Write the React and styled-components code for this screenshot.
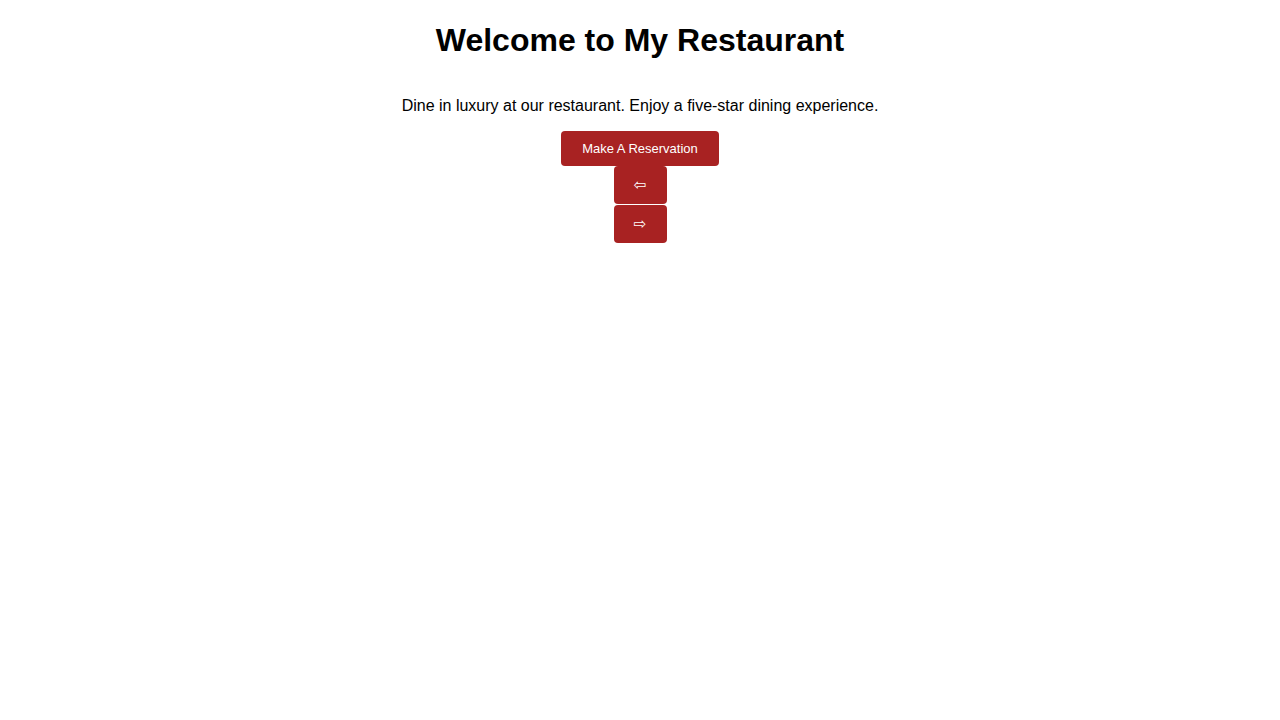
import React from "react";
import styled, { createGlobalStyle } from "styled-components";

const GlobalStyle = createGlobalStyle`
  body {
    margin: 0;
    background: #fff;
    font-family: "Liberation Sans", Arial, sans-serif;
    color: #000;
  }
`;

const Page = styled.div`
  display: flex;
  flex-direction: column;
  align-items: center;
  text-align: center;
`;

const Title = styled.h1`
  font-size: 32px;
  font-weight: bold;
  margin: 22px 0 0;
  line-height: 37px;
`;

const Tagline = styled.p`
  font-size: 16px;
  line-height: 18px;
  margin: 38px 0 16px;
`;

const Controls = styled.div`
  display: flex;
  flex-direction: column;
  align-items: center;
`;

const Button = styled.button`
  background: #a82222;
  color: #fff;
  border: none;
  border-radius: 4px;
  font-family: "Liberation Sans", Arial, sans-serif;
  font-size: 13px;
  padding: 0 ${(p) => (p.$arrow ? "20px" : "21px")};
  height: ${(p) => (p.$arrow ? "38px" : "35px")};
  width: ${(p) => (p.$arrow ? "53px" : "auto")};
  margin-bottom: ${(p) => (p.$arrow ? "1px" : "0")};
  cursor: pointer;
`;

const Arrow = styled.span`
  font-family: "DejaVu Sans", sans-serif;
  font-size: 15px;
`;

export default function App() {
  return (
    <>
      <GlobalStyle />
      <Page>
        <Title>Welcome to My Restaurant</Title>
        <Tagline>Dine in luxury at our restaurant. Enjoy a five-star dining experience.</Tagline>
        <Controls>
          <Button>Make A Reservation</Button>
          <Button $arrow><Arrow>⇦</Arrow></Button>
          <Button $arrow><Arrow>⇨</Arrow></Button>
        </Controls>
      </Page>
    </>
  );
}
